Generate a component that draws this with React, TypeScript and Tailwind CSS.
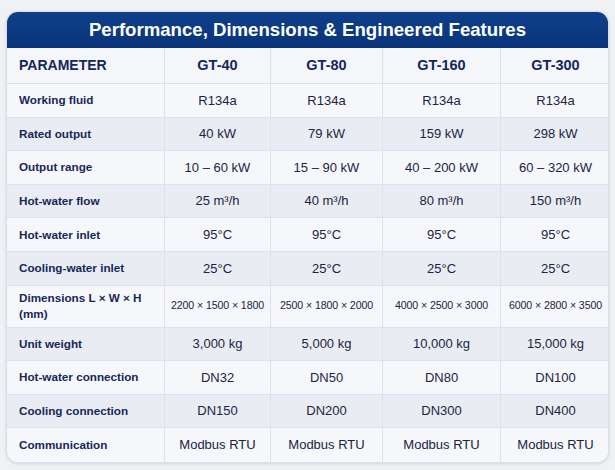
import React from "react";

const cols = ["GT-40", "GT-80", "GT-160", "GT-300"];

type Row = { label: React.ReactNode; vals: React.ReactNode[]; tall?: boolean; small?: boolean };

const rows: Row[] = [
  { label: "Working fluid", vals: ["R134a", "R134a", "R134a", "R134a"] },
  { label: "Rated output", vals: ["40 kW", "79 kW", "159 kW", "298 kW"] },
  { label: "Output range", vals: ["10 – 60 kW", "15 – 90 kW", "40 – 200 kW", "60 – 320 kW"] },
  { label: "Hot-water flow", vals: ["25 m³/h", "40 m³/h", "80 m³/h", "150 m³/h"] },
  { label: "Hot-water inlet", vals: ["95°C", "95°C", "95°C", "95°C"] },
  { label: "Cooling-water inlet", vals: ["25°C", "25°C", "25°C", "25°C"] },
  {
    label: (
      <>
        Dimensions L × W × H
        <br />
        (mm)
      </>
    ),
    vals: ["2200 × 1500 × 1800", "2500 × 1800 × 2000", "4000 × 2500 × 3000", "6000 × 2800 × 3500"],
    tall: true,
    small: true,
  },
  { label: "Unit weight", vals: ["3,000 kg", "5,000 kg", "10,000 kg", "15,000 kg"] },
  { label: "Hot-water connection", vals: ["DN32", "DN50", "DN80", "DN100"] },
  { label: "Cooling connection", vals: ["DN150", "DN200", "DN300", "DN400"] },
  { label: "Communication", vals: ["Modbus RTU", "Modbus RTU", "Modbus RTU", "Modbus RTU"] },
];

const grid = "grid grid-cols-[158px_106px_112px_118px_109px]";

export default function App() {
  return (
    <div
      className="w-[615px] h-[470px] bg-[#eff1f5] pt-[11px] px-[6px]"
      style={{ fontFamily: '"Liberation Sans", Arial, sans-serif' }}
    >
      <div className="w-[603px] rounded-[12px] overflow-hidden border border-[#d9dee7] bg-[#f6f7fa] shadow-[0_1px_3px_rgba(20,40,80,0.12)]">
        <div className="h-[36px] bg-gradient-to-b from-[#0f3f8a] to-[#0a347a] flex items-center justify-center">
          <span className="text-white font-bold text-[18.6px]">
            Performance, Dimensions &amp; Engineered Features
          </span>
        </div>
        <div className={`${grid} h-[36px] bg-[#f5f6f9] border-b border-[#dbe0e8]`}>
          <div className="flex items-center pl-[12px] text-[14px] font-bold text-[#13275e] border-r border-[#dbe0e8]">
            PARAMETER
          </div>
          {cols.map((c, i) => (
            <div
              key={c}
              className={`flex items-center justify-center text-[14.5px] font-bold text-[#13275e] ${
                i < 3 ? "border-r border-[#dbe0e8]" : ""
              }`}
            >
              {c}
            </div>
          ))}
        </div>
        {rows.map((r, ri) => (
          <div
            key={ri}
            className={`${grid} ${r.tall ? "h-[42px]" : "h-[33.6px]"} ${
              ri % 2 === 1 ? "bg-[#e9edf3]" : "bg-[#f6f7fa]"
            } ${ri < rows.length - 1 ? "border-b border-[#dde2ea]" : ""}`}
          >
            <div className="flex items-center pl-[12px] text-[11.7px] leading-[16px] font-bold text-[#16285a] border-r border-[#dde2ea]">
              <span>{r.label}</span>
            </div>
            {r.vals.map((v, i) => (
              <div
                key={i}
                className={`flex items-center justify-center ${
                  r.small ? "text-[10.6px] tracking-[-0.1px]" : "text-[13px]"
                } text-[#1b2442] whitespace-nowrap ${i < 3 ? "border-r border-[#dde2ea]" : ""}`}
              >
                {v}
              </div>
            ))}
          </div>
        ))}
      </div>
    </div>
  );
}
